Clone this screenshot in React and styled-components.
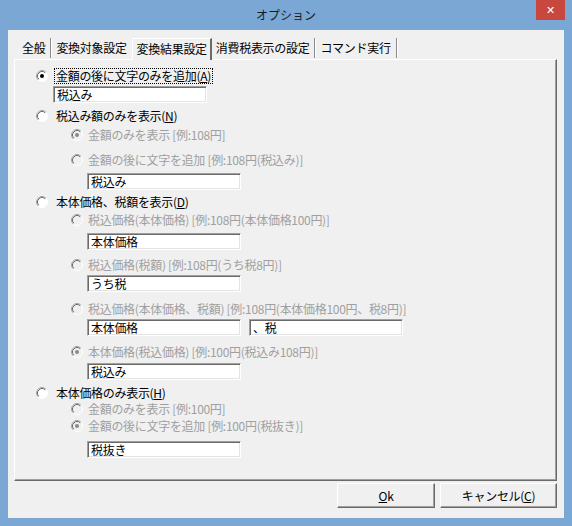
import React from "react";
import styled, { createGlobalStyle } from "styled-components";

const GlobalStyle = createGlobalStyle`
  html, body {
    margin: 0;
    padding: 0;
    background: #7ba7d4;
  }
  body {
    font-family: "Noto Sans CJK JP", "Noto Sans", sans-serif;
    font-size: 12px;
    letter-spacing: -0.3px;
  }
`;

const Radio = ({ checked, disabled }) => (
  <RadioBox>
    <svg width="12" height="12" viewBox="0 0 12 12">
      <circle cx="6" cy="6" r="5.5" fill={disabled ? "#f0f0f0" : "#ffffff"} stroke="#ffffff" />
      <path d="M2.11 9.89 A5.5 5.5 0 0 1 9.89 2.11" fill="none" stroke="#a0a0a0" />
      <path d="M2.82 9.18 A4.5 4.5 0 0 1 9.18 2.82" fill="none" stroke="#6a6a6a" />
      {checked && <circle cx="6" cy="6" r="2" fill={disabled ? "#8a8a8a" : "#000000"} />}
    </svg>
  </RadioBox>
);

const App = () => {
  return (
    <>
      <GlobalStyle />
      <Window>
        <TitleBar>
          <span />
          <Title>オプション</Title>
          <CloseButton>✕</CloseButton>
        </TitleBar>
        <Client>
          <TabRow>
            <Tab $sep>全般</Tab>
            <Tab>変換対象設定</Tab>
            <Tab $active>変換結果設定</Tab>
            <Tab $sep>消費税表示の設定</Tab>
            <Tab $sep>コマンド実行</Tab>
          </TabRow>
          <Panel>
            <Option $mt={0}>
              <Radio checked />
              <FocusLabel>
                金額の後に文字のみを追加(<u>A</u>)
              </FocusLabel>
            </Option>
            <Field $mt={3} $indent={17}>税込み</Field>

            <Option $mt={6}>
              <Radio />
              <Label>
                税込み額のみを表示(<u>N</u>)
              </Label>
            </Option>
            <SubOption $mt={5}>
              <Radio checked disabled />
              <Label $disabled>金額のみを表示 [例:108円]</Label>
            </SubOption>
            <SubOption $mt={11}>
              <Radio disabled />
              <Label $disabled>金額の後に文字を追加 [例:108円(税込み)]</Label>
            </SubOption>
            <Field $mt={6} $indent={51}>税込み</Field>

            <Option $mt={5}>
              <Radio />
              <Label>
                本体価格、税額を表示(<u>D</u>)
              </Label>
            </Option>
            <SubOption $mt={4}>
              <Radio disabled />
              <Label $disabled>税込価格(本体価格) [例:108円(本体価格100円)]</Label>
            </SubOption>
            <Field $mt={6} $indent={51}>本体価格</Field>
            <SubOption $mt={8}>
              <Radio disabled />
              <Label $disabled>税込価格(税額) [例:108円(うち税8円)]</Label>
            </SubOption>
            <Field $mt={3} $indent={51}>うち税</Field>
            <SubOption $mt={10}>
              <Radio disabled />
              <Label $disabled>税込価格(本体価格、税額) [例:108円(本体価格100円、税8円)]</Label>
            </SubOption>
            <FieldPair $mt={3}>
              <Field>本体価格</Field>
              <Field>、税</Field>
            </FieldPair>
            <SubOption $mt={9}>
              <Radio checked disabled />
              <Label $disabled>本体価格(税込価格) [例:100円(税込み108円)]</Label>
            </SubOption>
            <Field $mt={4} $indent={51}>税込み</Field>

            <Option $mt={6}>
              <Radio />
              <Label>
                本体価格のみ表示(<u>H</u>)
              </Label>
            </Option>
            <SubOption $mt={2}>
              <Radio disabled />
              <Label $disabled>金額のみを表示 [例:100円]</Label>
            </SubOption>
            <SubOption $mt={3}>
              <Radio checked disabled />
              <Label $disabled>金額の後に文字を追加 [例:100円(税抜き)]</Label>
            </SubOption>
            <Field $mt={8} $indent={51}>税抜き</Field>
          </Panel>
          <ButtonRow>
            <Button $w={98}>
              <u>O</u>k
            </Button>
            <Button $w={117}>
              キャンセル(<u>C</u>)
            </Button>
          </ButtonRow>
        </Client>
      </Window>
    </>
  );
};

const Window = styled.div`
  width: 572px;
  height: 526px;
  background: #7ba7d4;
  display: flex;
  flex-direction: column;
  box-sizing: border-box;
`;

const TitleBar = styled.div`
  height: 30px;
  display: grid;
  grid-template-columns: 1fr auto 1fr;
  align-items: start;
`;

const Title = styled.div`
  font-size: 12px;
  line-height: 30px;
  color: #1a1a1a;
  letter-spacing: 0;
`;

const CloseButton = styled.div`
  justify-self: end;
  margin-right: 7px;
  width: 29px;
  height: 20px;
  background: #c8473f;
  color: #ffffff;
  font-family: "DejaVu Sans", sans-serif;
  font-size: 11px;
  font-weight: bold;
  display: flex;
  align-items: center;
  justify-content: center;
`;

const Client = styled.div`
  flex: 1;
  margin: 0 8px 8px 8px;
  background: #f0f0f0;
  padding: 0 7px 0 6px;
  display: flex;
  flex-direction: column;
`;

const TabRow = styled.div`
  height: 29px;
  display: flex;
  align-items: flex-end;
  padding-left: 4px;
`;

const Tab = styled.div`
  height: ${(p) => (p.$active ? "22px" : "20px")};
  line-height: 20px;
  padding: ${(p) => (p.$active ? "0 3px 0 4px" : "0 5px 0 4px")};
  color: #000;
  white-space: nowrap;
  border-left: ${(p) => (p.$active ? "1px solid #ffffff" : "none")};
  border-top: ${(p) => (p.$active ? "1px solid #ffffff" : "none")};
  border-right: ${(p) =>
    p.$active ? "2px solid #6a6a6a" : p.$sep ? "1px solid #8a8a8a" : "none"};
  box-shadow: ${(p) => (p.$sep ? "1px 0 0 #ffffff" : "none")};
  margin-right: ${(p) => (p.$sep ? "1px" : "0")};
  box-sizing: border-box;
  margin-bottom: ${(p) => (p.$active ? "-1px" : "1px")};
  background: #f0f0f0;
  position: relative;
`;

const Panel = styled.div`
  height: 422px;
  box-sizing: border-box;
  border-top: 1px solid #ffffff;
  border-left: 1px solid #ffffff;
  border-right: 1px solid #6a6a6a;
  border-bottom: 1px solid #6a6a6a;
  box-shadow: inset -1px -1px 0 #a0a0a0;
  padding: 9px 0 0 21px;
  display: flex;
  flex-direction: column;
  align-items: flex-start;
`;

const RadioBox = styled.span`
  width: 12px;
  height: 12px;
  display: inline-flex;
  flex-shrink: 0;
  svg {
    display: block;
  }
`;

const Option = styled.div`
  height: 14px;
  margin-top: ${(p) => p.$mt}px;
  display: flex;
  align-items: center;
  gap: 7px;
`;

const SubOption = styled(Option)`
  margin-left: 35px;
  gap: 4px;
`;

const Label = styled.span`
  line-height: 14px;
  color: ${(p) => (p.$disabled ? "#a0a0a0" : "#000000")};
  white-space: nowrap;
  padding: 0 1px;
  u {
    text-underline-offset: 1px;
  }
`;

const FocusLabel = styled(Label)`
  outline: 1px dotted #000000;
  outline-offset: 0;
`;

const Field = styled.div`
  width: 154px;
  height: 17px;
  box-sizing: border-box;
  margin-top: ${(p) => p.$mt || 0}px;
  margin-left: ${(p) => p.$indent || 0}px;
  background: #ffffff;
  border-top: 1px solid #a0a0a0;
  border-left: 1px solid #a0a0a0;
  border-right: 1px solid #ffffff;
  border-bottom: 1px solid #ffffff;
  box-shadow: inset 1px 1px 0 #6a6a6a, inset -1px -1px 0 #e3e3e3;
  padding: 0 3px;
  line-height: 15px;
  color: #000;
  white-space: nowrap;
`;

const FieldPair = styled.div`
  margin-top: ${(p) => p.$mt}px;
  margin-left: 51px;
  display: flex;
  gap: 8px;
`;

const ButtonRow = styled.div`
  display: flex;
  justify-content: flex-end;
  gap: 5px;
  margin-top: 2px;
`;

const Button = styled.div`
  width: ${(p) => p.$w}px;
  height: 25px;
  box-sizing: border-box;
  background: #f0f0f0;
  border-top: 1px solid #ffffff;
  border-left: 1px solid #ffffff;
  border-right: 1px solid #6a6a6a;
  border-bottom: 1px solid #6a6a6a;
  box-shadow: inset -1px -1px 0 #a0a0a0;
  display: flex;
  align-items: center;
  justify-content: center;
  color: #000;
`;

export default App;
